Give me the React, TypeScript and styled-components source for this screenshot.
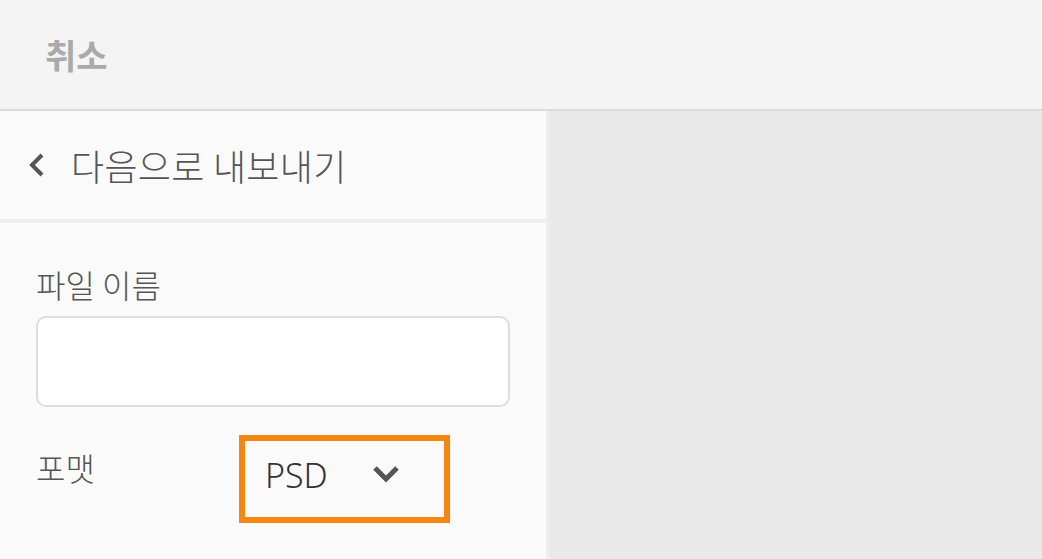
import React from "react";
import styled, { createGlobalStyle } from "styled-components";

const GlobalStyle = createGlobalStyle`
  html, body {
    margin: 0;
    padding: 0;
    background: #e9e9e9;
    font-family: "Noto Sans CJK KR", "Noto Sans", sans-serif;
  }
  * {
    box-sizing: border-box;
  }
`;

const Page = styled.div`
  display: flex;
  flex-direction: column;
  width: 1042px;
  height: 559px;
  overflow: hidden;
`;

const TopBar = styled.header`
  display: flex;
  align-items: center;
  height: 111px;
  flex-shrink: 0;
  padding: 0 0 0 45px;
  background: #f4f4f4;
  border-bottom: 2px solid #dcdcdc;
`;

const CancelButton = styled.button`
  border: none;
  background: none;
  padding: 0;
  font-family: inherit;
  font-size: 34px;
  font-weight: 700;
  color: #aaaaaa;
  cursor: pointer;
`;

const Body = styled.div`
  display: flex;
  flex: 1;
`;

const Panel = styled.aside`
  display: flex;
  flex-direction: column;
  width: 549px;
  background: #fafafa;
  border-right: 3px solid #eeeeee;
`;

const PanelHeader = styled.div`
  display: flex;
  align-items: center;
  gap: 26px;
  height: 112px;
  padding: 2px 0 2px 29px;
  border-bottom: 4px solid #eeeeee;
`;

const BackIcon = styled.svg`
  width: 16px;
  height: 24px;
`;

const Title = styled.h1`
  margin: 0;
  font-size: 36px;
  font-weight: 300;
  color: #555555;
  letter-spacing: 0.3px;
`;

const Form = styled.div`
  display: flex;
  flex-direction: column;
  padding: 39px 37px 0 36px;
`;

const Label = styled.label`
  font-size: 32px;
  font-weight: 300;
  color: #555555;
  line-height: 44px;
`;

const NameInput = styled.input`
  margin-top: 10px;
  width: 474px;
  height: 91px;
  border: 2px solid #dedede;
  border-radius: 10px;
  background: #ffffff;
  outline: none;
`;

const FormatRow = styled.div`
  display: grid;
  grid-template-columns: 203px auto;
  align-items: start;
  margin-top: 28px;
`;

const FormatLabel = styled(Label)`
  padding-top: 10px;
`;

const Select = styled.div`
  display: flex;
  align-items: flex-start;
  width: 211px;
  height: 88px;
  padding: 12px 0 0 20px;
  border: 6px solid #f08812;
`;

const SelectValue = styled.span`
  font-family: "Noto Sans", sans-serif;
  font-size: 34px;
  font-weight: 300;
  color: #333333;
  line-height: 44px;
`;

const Caret = styled.svg`
  width: 28px;
  height: 18px;
  margin: 12px 0 0 44px;
`;

const Canvas = styled.main`
  flex: 1;
  background: #e9e9e9;
`;

export default function App() {
  return (
    <>
      <GlobalStyle />
      <Page>
        <TopBar>
          <CancelButton>취소</CancelButton>
        </TopBar>
        <Body>
          <Panel>
            <PanelHeader>
              <BackIcon viewBox="0 0 16 24">
                <path d="M13 2 L3 12 L13 22" fill="none" stroke="#555" strokeWidth="4" />
              </BackIcon>
              <Title>다음으로 내보내기</Title>
            </PanelHeader>
            <Form>
              <Label>파일 이름</Label>
              <NameInput />
              <FormatRow>
                <FormatLabel>포맷</FormatLabel>
                <Select>
                  <SelectValue>PSD</SelectValue>
                  <Caret viewBox="0 0 28 18">
                    <path d="M3 3 L14 14 L25 3" fill="none" stroke="#555" strokeWidth="5" />
                  </Caret>
                </Select>
              </FormatRow>
            </Form>
          </Panel>
          <Canvas />
        </Body>
      </Page>
    </>
  );
}
